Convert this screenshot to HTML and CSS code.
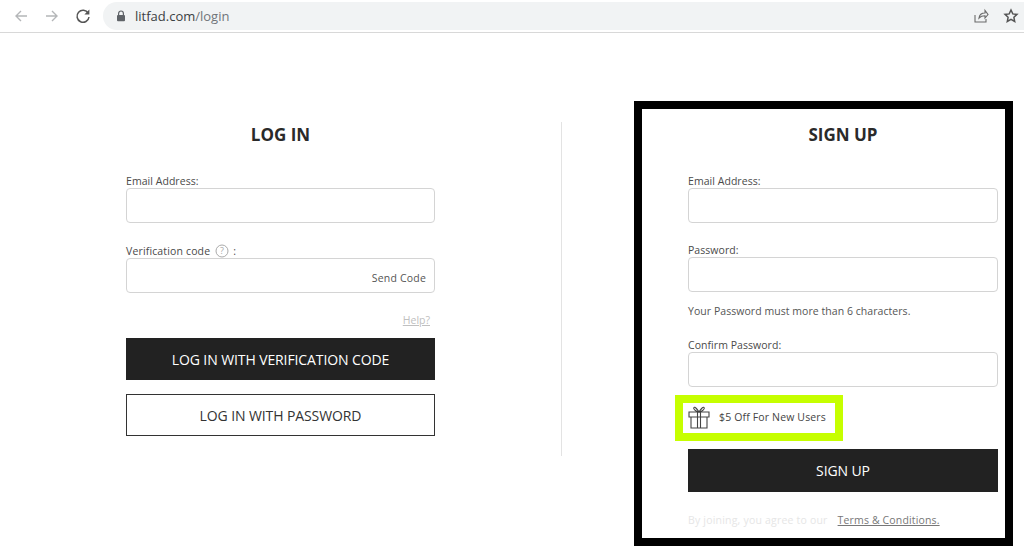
FILE: index.html
```html
<!DOCTYPE html>
<html lang="en">
<head>
  <meta charset="UTF-8" />
  <title>Litfad Login</title>
  <link rel="stylesheet" href="styles.css">
</head>
<body>

  <!-- BROWSER BAR -->
  <header class="browser-bar">
    <svg class="nav-icon" viewBox="0 0 16 16"><path class="soft" d="M14 8H3M8 3 3 8l5 5"/></svg>
    <svg class="nav-icon" viewBox="0 0 16 16"><path class="soft" d="M2 8h11M8 3l5 5-5 5"/></svg>
    <svg class="nav-icon" viewBox="0 0 16 16"><path class="dark" d="M13.2 5.2A6 6 0 1 0 14 9"/><path class="fill" d="M14.4 1.6v5h-5z"/></svg>
    <div class="omnibox">
      <svg class="lock" viewBox="0 0 10 12"><path d="M2.6 5V3.4a2.4 2.4 0 0 1 4.8 0V5" fill="none" stroke="#5f6368" stroke-width="1.2"/><rect x="1" y="5" width="8" height="6.2" rx="1" fill="#5f6368"/></svg>
      <span class="url">litfad.com<span class="url-path">/login</span></span>
      <svg class="omni-icon" viewBox="0 0 16 16"><path class="thin" d="M2 7v7h11v-3M6 10c.5-3.500 3-5 6-5V2.500l3 4-3 3.500V7.800c-2.500 0-4.500.6-6 2.200z"/></svg>
      <svg class="omni-icon" viewBox="0 0 16 16"><path class="dark" d="m8 2 1.800 3.900 4.200.5-3.100 2.900.8 4.200L8 11.400l-3.700 2.100.8-4.200L2 6.400l4.200-.5z"/></svg>
    </div>
  </header>

  <div class="main-content">
    <section class="login">
      <h2>LOG IN</h2>
      <div class="label first">Email Address:</div>
      <div class="input"></div>
      <div class="label gap-code">Verification code
        <svg class="help-icon" viewBox="0 0 14 14"><circle cx="7" cy="7" r="6" fill="none" stroke="#aaa"/><text x="7" y="10" text-anchor="middle" class="help-mark">?</text></svg> :
      </div>
      <div class="input input-code"><span class="send-code">Send Code</span></div>
      <a class="help-link">Help?</a>
      <button class="btn btn-dark">LOG IN WITH VERIFICATION CODE</button>
      <button class="btn btn-light">LOG IN WITH PASSWORD</button>
    </section>

    <div class="divider"></div>

    <section class="signup">
      <h2>SIGN UP</h2>
      <div class="label first">Email Address:</div>
      <div class="input"></div>
      <div class="label gap-pass">Password:</div>
      <div class="input"></div>
      <div class="hint">Your Password must more than 6 characters.</div>
      <div class="label gap-confirm">Confirm Password:</div>
      <div class="input"></div>
      <div class="promo">
        <svg class="gift" viewBox="0 0 22 24">
          <path d="M1 7h20v5H1zM3 12v11h16V12M9.500 7v16M12.500 7v16M11 7C9 4 7 1.500 6 2.500S7 6.500 11 7zM11 7c2-3 4-5.500 5-4.500S15 6.500 11 7z"/>
        </svg>
        <span>$5 Off For New Users</span>
      </div>
      <button class="btn btn-dark btn-signup">SIGN UP</button>
      <div class="terms"><span class="terms-faint">By joining, you agree to our</span><a>Terms &amp; Conditions.</a></div>
    </section>
  </div>

</body>
</html>
```

FILE: styles.css
```css
html, body {
  margin: 0; padding: 0;
  font-family: 'Open Sans', 'Noto Sans', sans-serif;
  background: #fff;
  color: #333;
  height: 555px;
  overflow: hidden;
}
.browser-bar {
  height: 33px;
  box-sizing: border-box;
  border-bottom: 1px solid #d8d8d8;
  display: flex;
  align-items: center;
  padding: 0 0 1px 13px;
  gap: 15px;
}
.nav-icon {
  width: 16px;
  height: 16px;
  flex: none;
}
.nav-icon .soft {
  fill: none;
  stroke: #b4b6b8;
  stroke-width: 1.4;
}
.dark {
  fill: none;
  stroke: #555;
  stroke-width: 1.5;
}
.thin {
  fill: none;
  stroke: #6a6a6a;
  stroke-width: 1.1;
}
.fill { fill: #555; }
.omnibox {
  flex: 1;
  height: 28px;
  background: #f1f3f4;
  border-radius: 14px 0 0 14px;
  margin-left: -3px;
  display: flex;
  align-items: center;
  padding: 0 5px 0 13px;
  gap: 14px;
}
.lock {
  width: 10px;
  height: 12px;
  flex: none;
  margin-right: -5px;
}
.url {
  flex: 1;
  font-size: 13px;
  color: #3c4043;
}
.url-path { color: #70757a; }
.omni-icon {
  width: 16px;
  height: 16px;
  flex: none;
}

.main-content {
  display: flex;
  align-items: flex-start;
  padding: 68px 0 0 126px;
}
.login {
  width: 309px;
  padding-top: 21px;
  flex: none;
}
.divider {
  width: 1px;
  height: 334px;
  flex: none;
  margin: 21px 72px 0 126px;
  background: #e3e3e3;
}
.signup {
  width: 310px;
  padding: 13px 7px 0 46px;
  border: 8px solid #000;
  flex: none;
  box-sizing: content-box;
  height: 416px;
}
h2 {
  margin: 1px 0 -1px;
  font-size: 17px;
  line-height: 24px;
  font-weight: 700;
  text-align: center;
  color: #2a2a2a;
}
.label {
  font-size: 10.500px;
  line-height: 14px;
  color: #4a4a4a;
  display: flex;
  align-items: center;
  gap: 4px;
  letter-spacing: 0.05px;
}
.label.first { margin-top: 28px; }
.label.gap-code { margin-top: 21px; letter-spacing: 0.15px; }
.label.gap-pass { margin-top: 20px; }
.label.gap-confirm { margin-top: 20px; }
.help-icon {
  width: 14px;
  height: 14px;
  margin-left: 1px;
}
.help-mark {
  font-size: 9px;
  fill: #aaa;
}
.input {
  height: 35px;
  box-sizing: border-box;
  border: 1px solid #d4d4d4;
  border-radius: 4px;
}
.input-code {
  display: flex;
  justify-content: flex-end;
  align-items: flex-end;
  padding: 0 8px 7px 0;
}
.send-code {
  font-size: 10.500px;
  line-height: 14px;
  color: #555;
  letter-spacing: 0.2px;
}
.help-link {
  display: block;
  text-align: right;
  margin: 20px 5px 0 0;
  font-size: 10.500px;
  line-height: 14px;
  color: #c0c0c0;
  text-decoration: underline;
}
.btn {
  display: block;
  width: 100%;
  height: 42px;
  box-sizing: border-box;
  font-family: inherit;
  font-size: 14px;
  padding: 0;
  letter-spacing: -0.1px;
}
.btn-dark {
  background: #222;
  color: #fff;
  border: 0;
  margin-top: 11px;
}
.btn-light {
  background: #fff;
  color: #333;
  border: 1px solid #333;
  margin-top: 14px;
}
.hint {
  margin-top: 12px;
  font-size: 10.500px;
  line-height: 14px;
  color: #555;
  letter-spacing: 0.05px;
}
.promo {
  display: flex;
  align-items: center;
  gap: 9px;
  width: 152px;
  height: 30px;
  margin: 8px 0 0 -13px;
  border: 8px solid #c6ff00;
  box-sizing: content-box;
  font-size: 10.500px;
  letter-spacing: 0.15px;
  color: #444;
}
.promo span { margin-bottom: 3px; }
.gift {
  width: 22px;
  height: 24px;
  flex: none;
  margin: 0 0 2px 5px;
  fill: none;
  stroke: #444;
  stroke-width: 1.1;
}
.btn-signup {
  margin-top: 8px;
  height: 43px;
}
.terms {
  margin-top: 21px;
  font-size: 10.500px;
  line-height: 14px;
  display: flex;
  gap: 10px;
}
.terms-faint {
  color: #e6e6e6;
  letter-spacing: 0.2px;
}
.terms a {
  color: #777;
  letter-spacing: 0.15px;
  text-decoration: underline;
}
```
